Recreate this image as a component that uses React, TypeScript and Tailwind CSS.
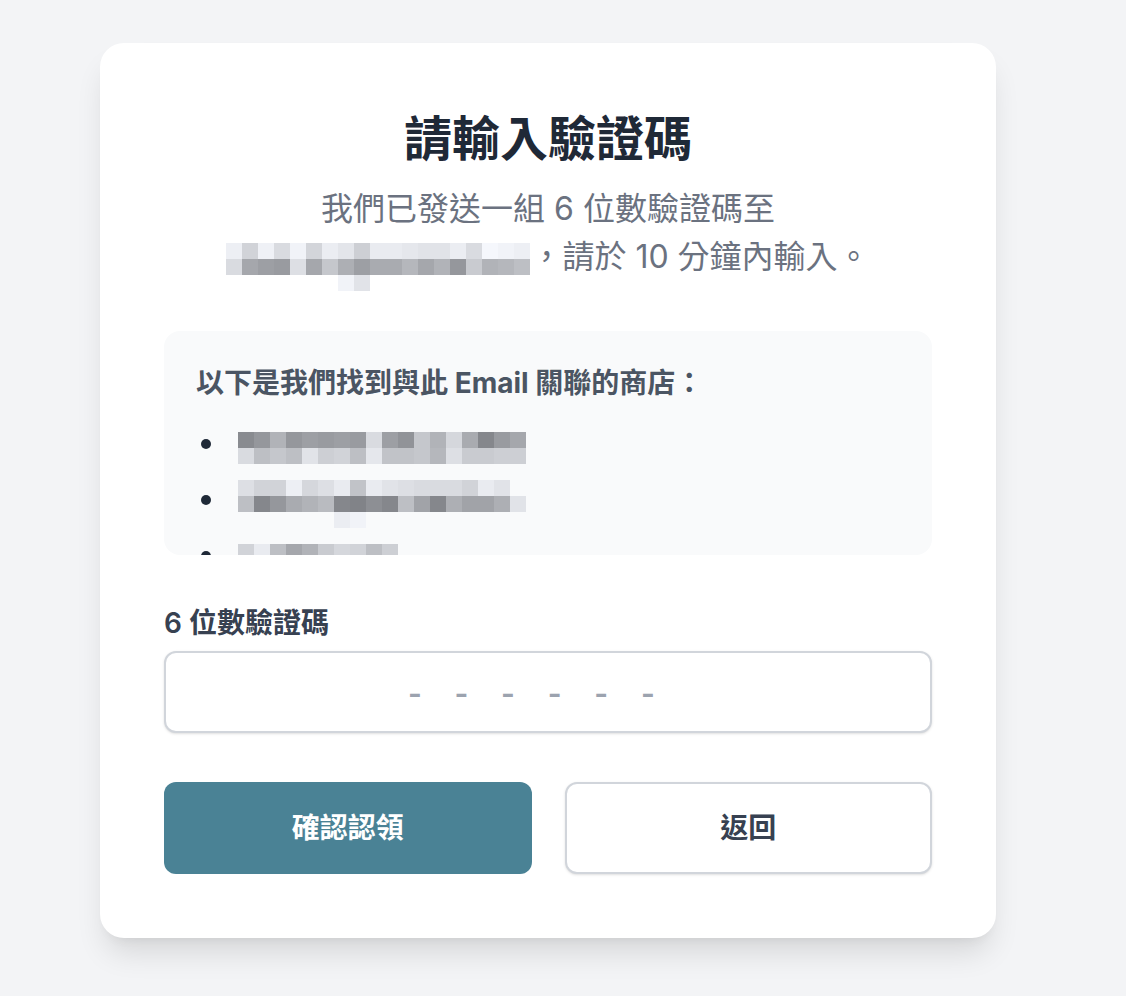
import React from 'react';

const FONT = 'font-["Inter","Noto_Sans_CJK_TC",sans-serif]';

// gray levels of the redacted (pixelated) text, one array per 16px row
const EMAIL_ROWS: (number | null)[][] = [
  [0xf0, 0xd4, 0xf2, 0xdc, 0xf4, 0xd6, 0xee, 0xe6, 0xd0, 0xec, 0xec, 0xe8, 0xe4, 0xe4, 0xee, 0xdc, 0xf8, 0xf4, 0xf0],
  [0xdc, 0xa8, 0xa0, 0x9c, 0xe0, 0xa8, 0xc8, 0xb0, 0xa0, 0xac, 0xac, 0xb8, 0xa8, 0xb4, 0x98, 0xcc, 0xb4, 0xb8, 0xc0],
  [null, null, null, null, null, null, null, 0xf4, 0xe4],
];

const STORES: { rows: (number | null)[][]; offset: string }[] = [
  {
    offset: 'mt-[9px]',
    rows: [
      [0x8c, 0x98, 0xb4, 0x98, 0xa0, 0x9c, 0xa0, 0x9c, 0xdc, 0xa0, 0x94, 0xc8, 0xb4, 0xd8, 0xac, 0x88, 0x9c, 0xa8],
      [0xdc, 0xc0, 0xc8, 0xc0, 0xe4, 0xd0, 0xd4, 0xc0, 0xe8, 0xc4, 0xc4, 0xc8, 0xb8, 0xe0, 0xcc, 0xcc, 0xd0, 0xd0],
    ],
  },
  {
    offset: 'mt-[1px]',
    rows: [
      [0xe0, 0xd4, 0xd4, 0xf0, 0xd8, 0xe0, 0xec, 0xc4, 0xec, 0xe4, 0xe0, 0xdc, 0xdc, 0xdc, 0xd4, 0xec, 0xe4],
      [0xc0, 0x88, 0x98, 0xac, 0xb4, 0xbc, 0x88, 0x84, 0x90, 0x88, 0xc0, 0xa4, 0x88, 0xb0, 0xa4, 0xa4, 0xb0, 0xe4],
      [null, null, null, null, null, null, 0xee, 0xf4],
    ],
  },
  {
    offset: 'mt-[9px]',
    rows: [
      [0xd4, 0xec, 0xc0, 0xa8, 0xb4, 0xcc, 0xd8, 0xd4, 0xc0, 0xd0],
      [0xe4, 0xdc, 0xd8, 0xe0, 0xd8],
    ],
  },
];

/** Pixelated block standing in for redacted text */
function Mosaic({ rows, height, className }: { rows: (number | null)[][]; height?: number; className?: string }) {
  const cols = Math.max(...rows.map((r) => r.length));
  return (
    <svg
      width={cols * 16}
      height={height ?? rows.length * 16}
      className={className}
      style={{ overflow: 'visible' }}
    >
      {rows.map((row, y) =>
        row.map((v, x) =>
          v === null ? null : (
            <rect key={`${x}-${y}`} x={x * 16} y={y * 16} width={16} height={16} fill={`rgb(${v - 3},${v - 1},${Math.min(255, v + 4)})`} />
          )
        )
      )}
    </svg>
  );
}

export default function App() {
  return (
    <div className={`min-h-screen bg-[#f3f4f6] pl-[100px] pt-[43px] ${FONT}`}>
      <div className="w-[896px] rounded-[24px] bg-white p-[64px] shadow-[0_20px_30px_-6px_rgba(0,0,0,0.12),0_8px_12px_-8px_rgba(0,0,0,0.08)]">
        <h1 className="text-center text-[48px] leading-[64px] font-bold text-[#1f2937]">請輸入驗證碼</h1>
        <p className="mt-[14px] text-center text-[32px] leading-[48px] text-[#6b7280]">
          我們已發送一組 6 位數驗證碼至
          <br />
          <Mosaic rows={EMAIL_ROWS} height={32} className="inline-block align-middle" />
          ，請於 10 分鐘內輸入。
        </p>

        <div className="mt-[50px] max-h-[224px] overflow-hidden rounded-[16px] bg-[#f9fafb] p-[32px]">
          <p className="text-[28px] leading-[40px] font-bold text-[#4b5563]">以下是我們找到與此 Email 關聯的商店：</p>
          <ul className="mt-[20px] flex flex-col gap-[16px]">
            {STORES.map((s, i) => (
              <li key={i} className="flex h-[40px] items-start">
                <span className="mt-[16px] ml-[5px] h-[10px] w-[10px] shrink-0 rounded-full bg-[#1f2937]" />
                <Mosaic rows={s.rows} className={`ml-[27px] block ${s.offset}`} />
              </li>
            ))}
          </ul>
        </div>

        <label className="mt-[48px] block text-[28px] leading-[40px] font-semibold text-[#374151]">6 位數驗證碼</label>
        <input
          type="text"
          placeholder="------"
          className="mt-[8px] block h-[82px] w-full rounded-[12px] border-2 border-[#d1d5db] bg-white text-center font-['Liberation_Sans',sans-serif] text-[40px] tracking-[33.3px] text-[#374151] shadow-sm outline-none placeholder:text-[#9ca3af]"
        />

        <div className="mt-[49px] grid grid-cols-2 gap-[33px]">
          <button className="h-[92px] rounded-[12px] bg-[#4a8295] text-[28px] font-bold text-white">確認認領</button>
          <button className="h-[92px] rounded-[12px] border-2 border-[#d1d5db] bg-white text-[28px] font-bold text-[#374151] shadow-sm">
            返回
          </button>
        </div>
      </div>
    </div>
  );
}
